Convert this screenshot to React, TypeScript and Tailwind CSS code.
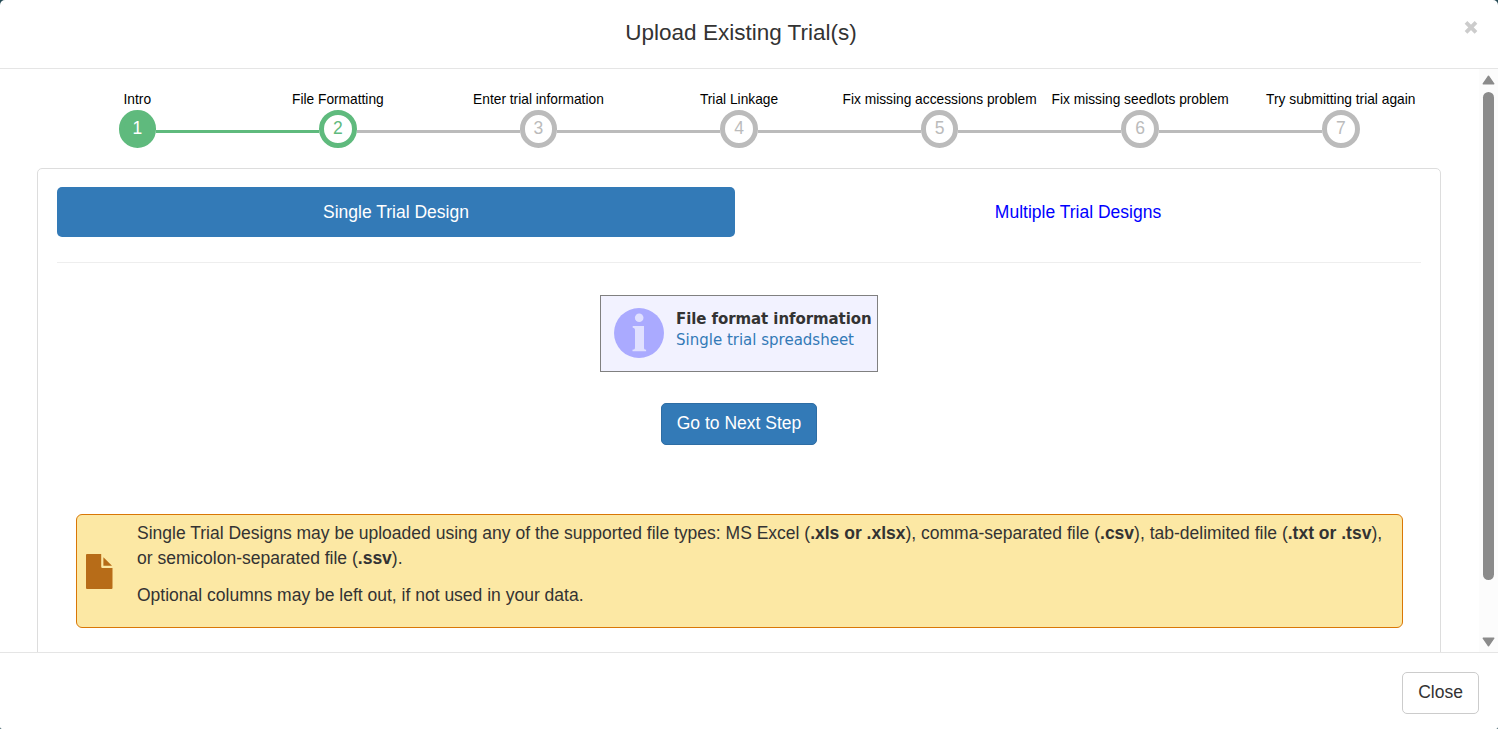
const steps = [
  'Intro',
  'File Formatting',
  'Enter trial information',
  'Trial Linkage',
  'Fix missing accessions problem',
  'Fix missing seedlots problem',
  'Try submitting trial again',
];

function Step({ label, index }: { label: string; index: number }) {
  const done = index === 0;
  const active = index === 1;
  const circle = done
    ? 'border-[#5fba7d] bg-[#5fba7d] text-white'
    : active
      ? 'border-[#5fba7d] bg-white text-[#5fba7d]'
      : 'border-[#bbbbbb] bg-white text-[#bbbbbb]';
  const left = index === 0 ? 'bg-transparent' : active ? 'bg-[#5fba7d]' : 'bg-[#bbbbbb]';
  const right = done ? 'bg-[#5fba7d]' : index === steps.length - 1 ? 'bg-transparent' : 'bg-[#bbbbbb]';
  return (
    <li className="flex min-w-0 flex-1 flex-col items-center">
      <span className="h-5 whitespace-nowrap text-[13.75px] leading-[22px] text-black">{label}</span>
      <div className="mt-[1px] flex w-full items-center">
        <span className={`mt-[5px] h-[3px] flex-1 ${left}`} />
        <span
          className={`flex h-[38px] w-[37.5px] justify-center rounded-full border-[5px] text-[17.5px] leading-[26px] ${circle}`}
        >
          {index + 1}
        </span>
        <span className={`mt-[5px] h-[3px] flex-1 ${right}`} />
      </div>
    </li>
  );
}

function InfoIcon() {
  return (
    <svg className="ml-[13px] mt-3 h-[50px] w-[50px] shrink-0" viewBox="0 0 50 50">
      <circle cx="25" cy="25" r="25" fill="#aaaaff" />
      <circle cx="25.2" cy="9.8" r="4.3" fill="#e0e0ff" />
      <path
        d="M18.7 18H30v21.2c0 1.9.6 2.3 2.1 2.5V43.3H18.5v-1.6c1.8-.2 2.5-.6 2.5-2.5V22.4c0-1.9-.6-2.5-2.3-2.7z"
        fill="#e0e0ff"
      />
    </svg>
  );
}

function ScrollBar() {
  return (
    <div className="flex w-[19px] shrink-0 flex-col items-center bg-[#fcfcfc]">
      <svg className="mt-[6px] h-[10px] w-[13px] shrink-0" viewBox="0 0 13 10">
        <path d="M6.5 1.2 11.8 8.8H1.2z" fill="#8b8b8b" stroke="#8b8b8b" strokeWidth="1.4" strokeLinejoin="round" />
      </svg>
      <div className="mt-[7px] h-[488px] w-[11px] rounded-full bg-[#8b8b8b]" />
      <svg className="mb-[5px] mt-auto h-[10px] w-[13px] shrink-0" viewBox="0 0 13 10">
        <path d="M6.5 8.8 1.2 1.2h10.6z" fill="#8b8b8b" stroke="#8b8b8b" strokeWidth="1.4" strokeLinejoin="round" />
      </svg>
    </div>
  );
}

export default function App() {
  return (
    <div className="h-[729px] w-full overflow-hidden bg-[#244a55] font-['Liberation_Sans',Arial,sans-serif] text-[17.5px] leading-[25px] text-[#333333]">
      <div className="flex h-full flex-col rounded-t-[5px] rounded-b-[2px] bg-white">
        <header className="flex h-[69px] shrink-0 border-b border-[#e5e5e5] pr-[20px]">
          <h4 className="ml-[18px] flex-1 pt-[16px] text-center text-[22.5px] leading-[33px]">Upload Existing Trial(s)</h4>
          <button aria-label="Close dialog" className="mt-[20px] h-[14px] w-[14px]">
            <svg viewBox="0 0 14 14" className="h-full w-full">
              <path d="M2 2.4 12 12.4M12 2.4 2 12.4" stroke="#cccccc" strokeWidth="3.8" />
            </svg>
          </button>
        </header>

        <main className="flex h-[583px] shrink-0 overflow-hidden">
          <div className="min-w-0 flex-1 pl-[37px] pr-[38px] pt-5">
            <ol className="flex">
              {steps.map((label, index) => (
                <Step key={label} label={label} index={index} />
              ))}
            </ol>

            <section className="mt-5 h-[600px] rounded-[5px] border border-[#dddddd] px-[19px] pt-[18px]">
              <nav className="flex text-center leading-[50px]">
                <a className="h-[50px] w-[678px] rounded-[5px] bg-[#337ab7] text-white">Single Trial Design</a>
                <a className="h-[50px] flex-1 text-[#0000ff]">Multiple Trial Designs</a>
              </nav>
              <hr className="mt-[25px] border-[#eeeeee]" />

              <div className="mx-auto mt-8 flex h-[77px] w-[278px] border border-[#808080] bg-[#f2f2ff]">
                <InfoIcon />
                <div className="ml-3 mt-[13px] whitespace-nowrap font-['DejaVu_Sans',Verdana,sans-serif] text-[15px] leading-[21px]">
                  <div className="font-bold tracking-[-0.08px]">File format information</div>
                  <a className="text-[#337ab7]">Single trial spreadsheet</a>
                </div>
              </div>

              <button className="mx-auto mt-[31px] block h-[42px] w-[156px] rounded-[5px] border border-[#2e6da4] bg-[#337ab7] pb-[2px] text-white">
                Go to Next Step
              </button>

              <div className="ml-[19px] mr-[18px] mt-[69px] flex h-[114px] rounded-[6px] border border-[#d97706] bg-[#fce8a4]">
                <svg className="ml-[9px] mt-[39px] h-[35px] w-[27px] shrink-0" viewBox="0 0 27 35">
                  <path
                    d="M1 0H15.2V12.8a1.2 1.2 0 0 0 1.2 1.2H26.5V34a1 1 0 0 1-1 1H1a1 1 0 0 1-1-1V1A1 1 0 0 1 1 0z"
                    fill="#b76c18"
                  />
                  <path d="M17.4 3.2 26 11.7H17.4z" fill="#b76c18" />
                </svg>
                <div className="ml-6 mt-[6px] flex-1">
                  <p>
                    Single Trial Designs may be uploaded using any of the supported file types: MS Excel (<b>.xls or .xlsx</b>
                    ), comma-separated file (<b>.csv</b>), tab-delimited file (<b>.txt or .tsv</b>), or semicolon-separated
                    file (<b>.ssv</b>).
                  </p>
                  <p className="mt-3">Optional columns may be left out, if not used in your data.</p>
                </div>
              </div>
            </section>
          </div>
          <ScrollBar />
        </main>

        <footer className="flex flex-1 justify-end border-t border-[#e5e5e5] pr-[19px] pt-[19px]">
          <button className="h-[42px] w-[77px] rounded-[5px] border border-[#cccccc] bg-white pb-[2px]">Close</button>
        </footer>
      </div>
    </div>
  );
}
